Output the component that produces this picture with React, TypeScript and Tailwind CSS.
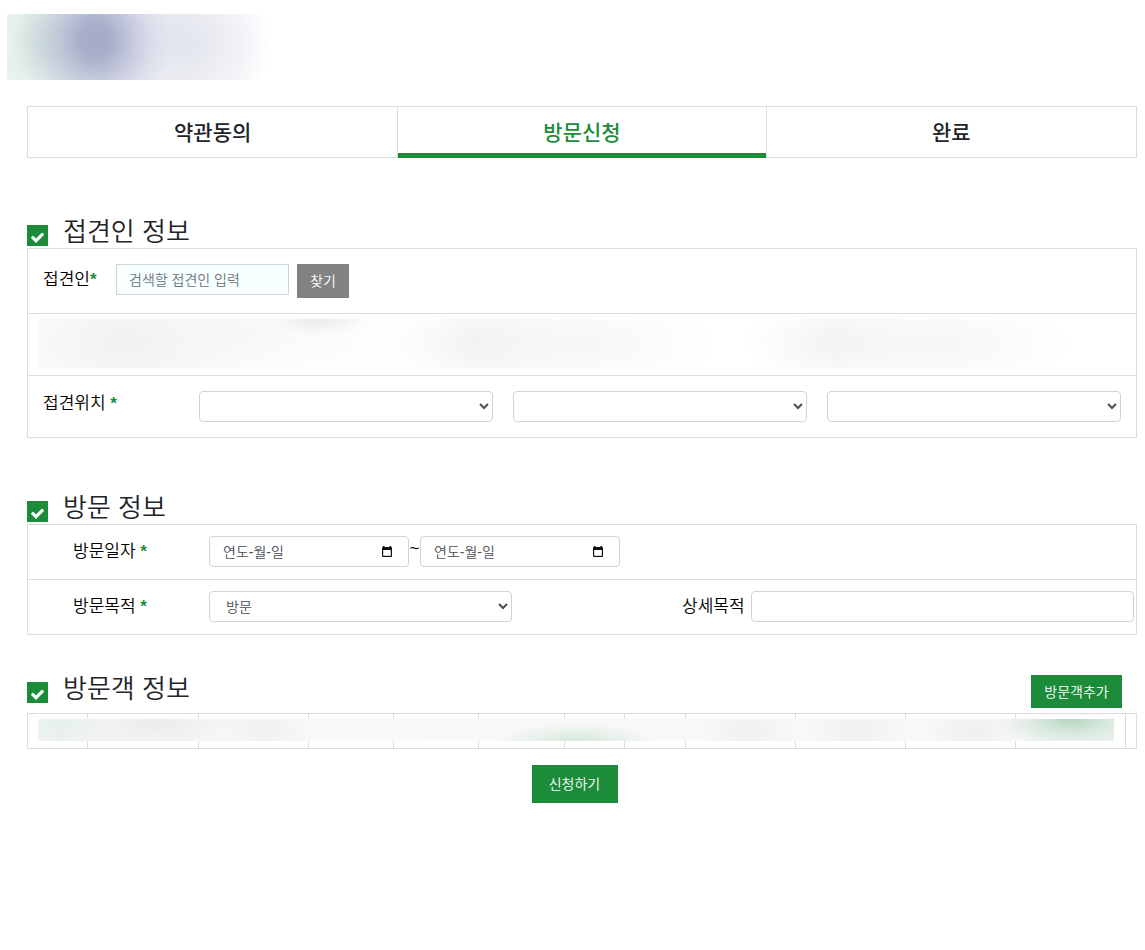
import React from "react";

const fieldClass = "h-[31px] rounded border border-[#ced4da] bg-white text-sm text-[#495057] outline-none";

const visitorColumns = [60, 111, 110, 85, 85, 86, 60, 61, 110, 110, 110, 110, 11];

function CheckIcon() {
  return (
    <svg width="15" height="15" viewBox="0 0 1792 1792" fill="currentColor">
      <path d="M1671 566q0 40-28 68l-724 724-136 136q-28 28-68 28t-68-28l-136-136-362-362q-28-28-28-68t28-68l136-136q28-28 68-28t68 28l294 295 656-657q28-28 68-28t68 28l136 136q28 28 28 68z" />
    </svg>
  );
}

function SectionTitle({ children }: { children: React.ReactNode }) {
  return (
    <div className="flex items-end">
      <span className="mb-0.5 flex h-[21px] w-[21px] items-center justify-center bg-[#1c8c3a] pt-1 text-white">
        <CheckIcon />
      </span>
      <h2 className="ml-[15px] pb-0.5 text-[26px] font-[350] leading-7 text-[#212529]">{children}</h2>
    </div>
  );
}

function Required() {
  return <span className="font-bold text-[#1c8c3a]">*</span>;
}

function CalendarIcon() {
  return (
    <svg width="12" height="12" viewBox="0 0 12 12" fill="none">
      <path d="M2 0h1.500v1h5V0H10v1q1 0 1 1v8q0 1-1 1H2q-1 0-1-1V2q0-1 1-1z" fill="#111" />
      <path d="M2.200 4h7.600v5.800H2.200z" fill="#fff" />
    </svg>
  );
}

function DateField({ label }: { label: string }) {
  return (
    <div className={`${fieldClass} flex w-[200px] items-center pl-[13px] pr-[15px]`}>
      <input
        type="text"
        aria-label={label}
        placeholder="연도-월-일"
        className="min-w-0 flex-1 outline-none placeholder:text-[#495057]"
      />
      <button type="button" aria-label="달력">
        <CalendarIcon />
      </button>
    </div>
  );
}

export default function App() {
  return (
    <div className="bg-white pb-20 pt-3.5 font-['Liberation_Sans','Noto_Sans_CJK_KR',sans-serif] font-[350] text-black">
      {/* Logo */}
      <header className="pl-[7px]">
        <div
          role="img"
          aria-label="로고"
          className="h-[66px] w-[264px] bg-[radial-gradient(ellipse_78px_84px_at_88px_26px,#a2aac6_0%,#a8afca_20%,#b9bdd5b0_50%,#c9cce060_75%,transparent_100%),radial-gradient(ellipse_64px_80px_at_36px_28px,#cfe3d9_0%,#deece4a0_50%,transparent_100%),radial-gradient(ellipse_90px_80px_at_175px_28px,#e1e4ec_0%,#e8e9f0a0_50%,transparent_100%),linear-gradient(90deg,#f2f9f4_0%,#ebedf4_40%,#f3f4f8_70%,#ffffff_98%)]"
        />
      </header>

      <main className="ml-[27px] mr-2">
        {/* Steps */}
        <ol className="mt-[26px] grid h-[52px] grid-cols-3 border border-[#dcdcdc] text-center text-[21px] font-medium leading-[52px] text-[#212529]">
          <li>약관동의</li>
          <li className="-mb-px h-[51px] border-x border-[#dcdcdc] text-[#1c8c3a]" aria-current="step">
            <span className="block h-full border-b-5 border-[#1c8c3a]">방문신청</span>
          </li>
          <li>완료</li>
        </ol>

        {/* Host */}
        <section className="mt-[60px]">
          <SectionTitle>접견인 정보</SectionTitle>
          <div className="divide-y divide-[#dcdcdc] border border-[#dcdcdc]">
            <div className="flex h-[65px] items-start pl-[15px] pt-[15px]">
              <label htmlFor="host" className="w-[73px] text-[17px] leading-8">
                접견인<Required />
              </label>
              <input
                id="host"
                type="text"
                placeholder="검색할 접견인 입력"
                className="h-[31px] w-[173px] border border-[#ced4da] bg-[#f7ffff] px-3 text-sm outline-none placeholder:text-[#6c757d]"
              />
              <button type="button" className="ml-2 h-[34px] w-[52px] bg-[#828282] text-sm text-white">
                찾기
              </button>
            </div>
            <div className="h-[62px] pl-2.5 pr-[22px] pt-[5px]">
              <div className="h-[49px] bg-[radial-gradient(ellipse_50px_16px_at_26%_0%,#e9e9e9_0%,transparent_100%),radial-gradient(ellipse_150px_80px_at_8%_50%,#f1f1f1_0%,#f5f5f5b0_50%,transparent_100%),radial-gradient(ellipse_200px_60px_at_18%_30%,#f6f8f7_0%,transparent_100%),radial-gradient(ellipse_90px_48px_at_41%_50%,#f2f2f2_0%,transparent_100%),radial-gradient(ellipse_140px_50px_at_50%_50%,#f6f6f6_0%,transparent_100%),radial-gradient(ellipse_90px_48px_at_74%_50%,#f1f3f2_0%,transparent_100%),radial-gradient(ellipse_130px_50px_at_84%_50%,#f6f6f6_0%,transparent_100%)]" />
            </div>
            <div className="flex h-[61px] items-start px-[15px] pt-[15px]">
              <span className="w-[156px] text-[17px] leading-[26px]">
                접견위치 <Required />
              </span>
              <div className="flex flex-1 gap-5">
                <select aria-label="접견위치 1" className={`${fieldClass} min-w-0 flex-1 px-3`} />
                <select aria-label="접견위치 2" className={`${fieldClass} min-w-0 flex-1 px-3`} />
                <select aria-label="접견위치 3" className={`${fieldClass} min-w-0 flex-1 px-3`} />
              </div>
            </div>
          </div>
        </section>

        {/* Visit */}
        <section className="mt-14">
          <SectionTitle>방문 정보</SectionTitle>
          <div className="divide-y divide-[#dcdcdc] border border-[#dcdcdc]">
            <div className="flex h-[55px] items-start pl-[45px] pt-[11px]">
              <span className="w-[136px] text-[17px] leading-8">
                방문일자 <Required />
              </span>
              <DateField label="방문 시작일" />
              <span className="w-[11px] text-center text-[17px] leading-[26px]">~</span>
              <DateField label="방문 종료일" />
            </div>
            <div className="grid h-[54px] grid-cols-2">
              <div className="flex items-start pl-[45px] pr-[70px] pt-[11px]">
                <label htmlFor="purpose" className="w-[136px] text-[17px] leading-8">
                  방문목적 <Required />
                </label>
                <select id="purpose" className={`${fieldClass} min-w-0 flex-1 px-3`}>
                  <option>방문</option>
                </select>
              </div>
              <div className="flex items-start pl-[100px] pr-0.5 pt-[11px]">
                <label htmlFor="detail" className="w-[69px] text-[17px] leading-8">
                  상세목적
                </label>
                <input id="detail" type="text" className={`${fieldClass} min-w-0 flex-1 px-3`} />
              </div>
            </div>
          </div>
        </section>

        {/* Visitors */}
        <section className="mt-10">
          <div className="flex items-start justify-between pr-[15px]">
            <SectionTitle>방문객 정보</SectionTitle>
            <button type="button" className="mb-[5px] h-[33px] w-[91px] bg-[#1c8c3a] text-sm text-white">
              방문객추가
            </button>
          </div>
          <div className="relative">
            <table aria-label="방문객 목록" className="h-9 w-full table-fixed border-collapse">
              <colgroup>
                {visitorColumns.map((width, i) => (
                  <col key={i} style={{ width: `${(width / 1109) * 100}%` }} />
                ))}
              </colgroup>
              <tbody>
                <tr>
                  {visitorColumns.map((_, i) => (
                    <td key={i} className="border border-[#dcdcdc]" />
                  ))}
                </tr>
              </tbody>
            </table>
            <div className="absolute left-[11px] right-[23px] top-1.5 h-[22px] bg-[radial-gradient(ellipse_75px_30px_at_96%_0%,#b5d6bf_0%,#cfe4d6b0_50%,transparent_100%),radial-gradient(ellipse_80px_18px_at_50%_100%,#d5e8db_0%,transparent_100%),radial-gradient(ellipse_60px_40px_at_2%_20%,#e6f0ea_0%,transparent_100%),radial-gradient(ellipse_80px_30px_at_11%_20%,#ebebeb_0%,transparent_100%),radial-gradient(ellipse_50px_30px_at_21%_50%,#f0f0f0_0%,transparent_100%),radial-gradient(ellipse_50px_30px_at_66%_50%,#f0f0f0_0%,transparent_100%),radial-gradient(ellipse_50px_30px_at_76%_50%,#f0f0f0_0%,transparent_100%),radial-gradient(ellipse_50px_30px_at_87%_50%,#efefef_0%,transparent_100%),linear-gradient(90deg,#f4f5f4,#f9f9f9_20%,#f8f8f8_90%,#edf3ef)]" />
          </div>
        </section>

        <div className="mt-4 flex justify-center pr-[15px]">
          <button type="submit" className="h-[38px] w-[86px] bg-[#1c8c3a] text-sm text-white">
            신청하기
          </button>
        </div>
      </main>
    </div>
  );
}
